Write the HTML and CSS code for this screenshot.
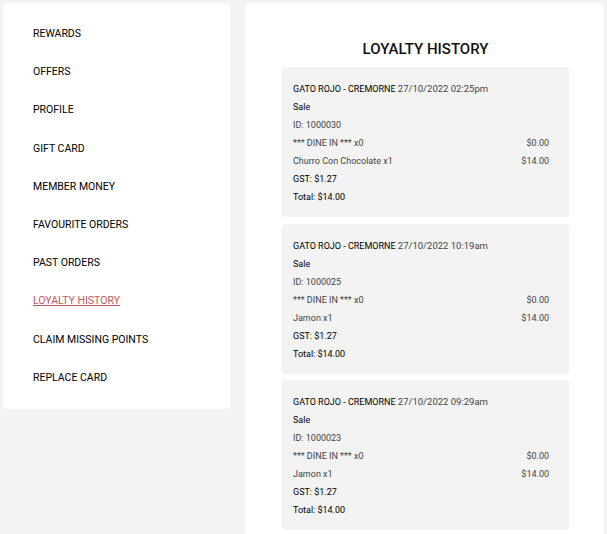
FILE: index.html
```html
<!DOCTYPE html>
<html>
<head>
<meta charset="utf-8">
<link rel="stylesheet" href="styles.css">
</head>
<body>
<div class="page">
  <aside class="sidebar">
    <ul class="nav">
      <li><a href="#">REWARDS</a></li>
      <li><a href="#">OFFERS</a></li>
      <li><a href="#">PROFILE</a></li>
      <li><a href="#">GIFT CARD</a></li>
      <li><a href="#">MEMBER MONEY</a></li>
      <li><a href="#">FAVOURITE ORDERS</a></li>
      <li><a href="#">PAST ORDERS</a></li>
      <li><a href="#" class="active">LOYALTY HISTORY</a></li>
      <li><a href="#">CLAIM MISSING POINTS</a></li>
      <li><a href="#">REPLACE CARD</a></li>
    </ul>
  </aside>
  <main class="content">
    <h1 class="title">LOYALTY HISTORY</h1>
    <div class="card">
      <div class="row"><span><span class="store">GATO ROJO - CREMORNE</span> <span class="date">27/10/2022 02:25pm</span></span></div>
      <div class="row strong">Sale</div>
      <div class="row">ID: 1000030</div>
      <div class="row item"><span>*** DINE IN *** x0</span><span>$0.00</span></div>
      <div class="row item"><span>Churro Con Chocolate x1</span><span>$14.00</span></div>
      <div class="row strong">GST: $1.27</div>
      <div class="row strong">Total: $14.00</div>
    </div>
    <div class="card">
      <div class="row"><span><span class="store">GATO ROJO - CREMORNE</span> <span class="date">27/10/2022 10:19am</span></span></div>
      <div class="row strong">Sale</div>
      <div class="row">ID: 1000025</div>
      <div class="row item"><span>*** DINE IN *** x0</span><span>$0.00</span></div>
      <div class="row item"><span>Jamon x1</span><span>$14.00</span></div>
      <div class="row strong">GST: $1.27</div>
      <div class="row strong">Total: $14.00</div>
    </div>
    <div class="card">
      <div class="row"><span><span class="store">GATO ROJO - CREMORNE</span> <span class="date">27/10/2022 09:29am</span></span></div>
      <div class="row strong">Sale</div>
      <div class="row">ID: 1000023</div>
      <div class="row item"><span>*** DINE IN *** x0</span><span>$0.00</span></div>
      <div class="row item"><span>Jamon x1</span><span>$14.00</span></div>
      <div class="row strong">GST: $1.27</div>
      <div class="row strong">Total: $14.00</div>
    </div>
  </main>
</div>
</body>
</html>
```

FILE: styles.css
```css
* { box-sizing: border-box; }
html, body { margin: 0; padding: 0; }
body {
  background: #f3f3f3;
  font-family: Roboto, "Liberation Sans", Arial, sans-serif;
  color: #222;
  height: 534px;
  overflow: hidden;
}
.page {
  display: flex;
  align-items: flex-start;
  gap: 15px;
  padding: 3px 0 0 3px;
}
.sidebar {
  width: 227px;
  background: #fff;
  border-radius: 4px;
  padding: 11.5px 0 12.5px 30px;
}
.nav {
  list-style: none;
  margin: 0;
  padding: 0;
}
.nav li {
  height: 38.2px;
  display: flex;
  align-items: center;
}
.nav a {
  font-size: 10.5px;
  color: #000;
  text-decoration: none;
}
.nav a.active {
  color: #c4575c;
  text-decoration: underline;
}
.content {
  width: 359px;
  min-height: 560px;
  background: #fff;
  border-radius: 4px;
  padding: 36px 35px 0 37px;
}
.title {
  margin: 0 0 8px;
  text-align: center;
  font-size: 15px;
  line-height: 20px;
  font-weight: 500;
  color: #111;
}
.card {
  background: #f3f3f3;
  border-radius: 3px;
  padding: 13px 20px 11px 11px;
  margin-bottom: 6.5px;
  font-size: 9px;
  color: #444;
}
.row {
  height: 18px;
  line-height: 18px;
  display: flex;
  justify-content: space-between;
}
.store { color: #000; }
.date { color: #444; font-size: 9.5px; }
.strong { color: #000; }
```
